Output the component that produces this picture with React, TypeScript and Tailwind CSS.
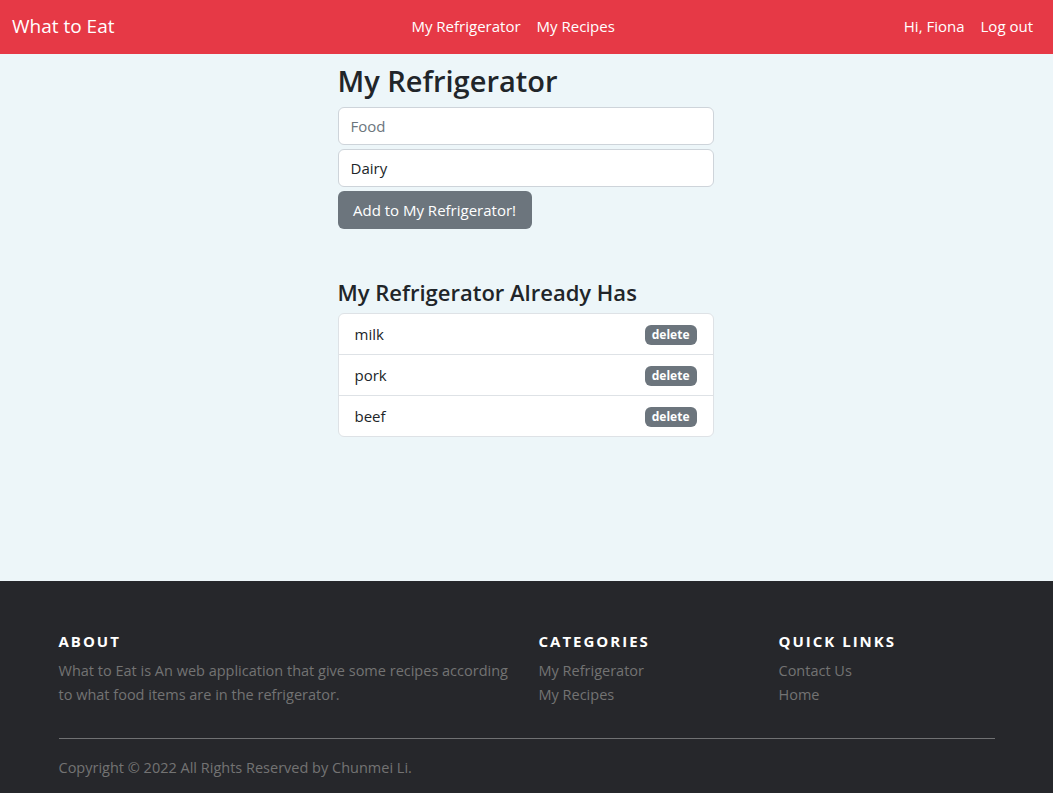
import React from "react";

const FoodItems = [
  { id: 1, name: "milk" },
  { id: 2, name: "pork" },
  { id: 3, name: "beef" },
];

const font = { fontFamily: '"Open Sans", "Noto Sans", sans-serif' };

const App: React.FC = () => {
  return (
    <div className="w-full min-h-screen bg-[#edf6f9] text-[#212529]" style={font}>
      {/** NAVBAR */}
      <nav className="flex h-[54px] items-center justify-between bg-[#e63946] px-3 pb-[1px] text-white">
        <a href="#" className="mr-4 text-[19px]">
          What to Eat
        </a>
        <div className="flex text-[15px]">
          <a href="#" className="px-2">My Refrigerator</a>
          <a href="#" className="px-2">My Recipes</a>
        </div>
        <div className="flex text-[15px]">
          <a href="#" className="px-2">Hi, Fiona</a>
          <a href="#" className="px-2">Log out</a>
        </div>
      </nav>

      {/** MAIN */}
      <main className="min-h-[527px] pt-[10px]">
        <div className="mx-auto w-[376px] -translate-x-px">
          <h1 className="mb-2 text-[29px] font-semibold leading-[1.2]">My Refrigerator</h1>
          <form className="flex flex-col gap-1" onSubmit={(e) => e.preventDefault()}>
            <input
              placeholder="Food"
              className="h-[38px] rounded-md border border-[#ced4da] bg-white px-3 text-[15px] placeholder:text-[#6c757d] outline-none"
            />
            <input
              defaultValue="Dairy"
              className="h-[38px] rounded-md border border-[#ced4da] bg-white px-3 text-[15px] outline-none"
            />
            <button className="h-[38px] w-[194px] rounded-md bg-[#6c757d] text-[15px] text-white">
              Add to My Refrigerator!
            </button>
          </form>

          <h3 className="mt-[50px] mb-2 text-[22px] font-semibold leading-[1.2]">
            My Refrigerator Already Has
          </h3>
          <ul className="overflow-hidden rounded-md border border-[#dee2e6] bg-white">
            {FoodItems.map(({ id, name }) => (
              <li
                key={id}
                className="flex h-[41px] items-center justify-between border-b border-[#dee2e6] px-4 text-[15px] last:h-[40px] last:border-b-0"
              >
                <span>{name}</span>
                <span className="mt-px rounded-md bg-[#6c757d] px-[7px] py-[2px] text-[12px] font-bold leading-[16px] text-white">
                  delete
                </span>
              </li>
            ))}
          </ul>
        </div>
      </main>

      {/** FOOTER */}
      <footer className="bg-[#26272b] pt-[45px] pb-[20px] text-[14.5px] leading-[24px] text-[#737373]">
        <div className="mx-auto w-[936px]">
          <div className="flex">
            <div className="w-[480px] pr-6">
              <h6 className="mt-[6px] mb-2 text-[15px] font-bold uppercase leading-[19px] tracking-[2px] text-white">
                About
              </h6>
              <p className="mb-4">
                What to Eat is An web application that give some recipes according to what food
                items are in the refrigerator.
              </p>
            </div>
            <div className="w-[240px]">
              <h6 className="mt-[6px] mb-2 text-[15px] font-bold uppercase leading-[19px] tracking-[2px] text-white">
                Categories
              </h6>
              <ul>
                <li><a href="#">My Refrigerator</a></li>
                <li><a href="#">My Recipes</a></li>
              </ul>
            </div>
            <div className="w-[216px]">
              <h6 className="mt-[6px] mb-2 text-[15px] font-bold uppercase leading-[19px] tracking-[2px] text-white">
                Quick Links
              </h6>
              <ul>
                <li><a href="#">Contact Us</a></li>
                <li><a href="#">Home</a></li>
              </ul>
            </div>
          </div>
          <hr className="mt-[15px] mb-4 border-t border-[#707173]" />
          <p className="pt-px">Copyright © 2022 All Rights Reserved by Chunmei Li.</p>
        </div>
      </footer>
    </div>
  );
};

export default App;
